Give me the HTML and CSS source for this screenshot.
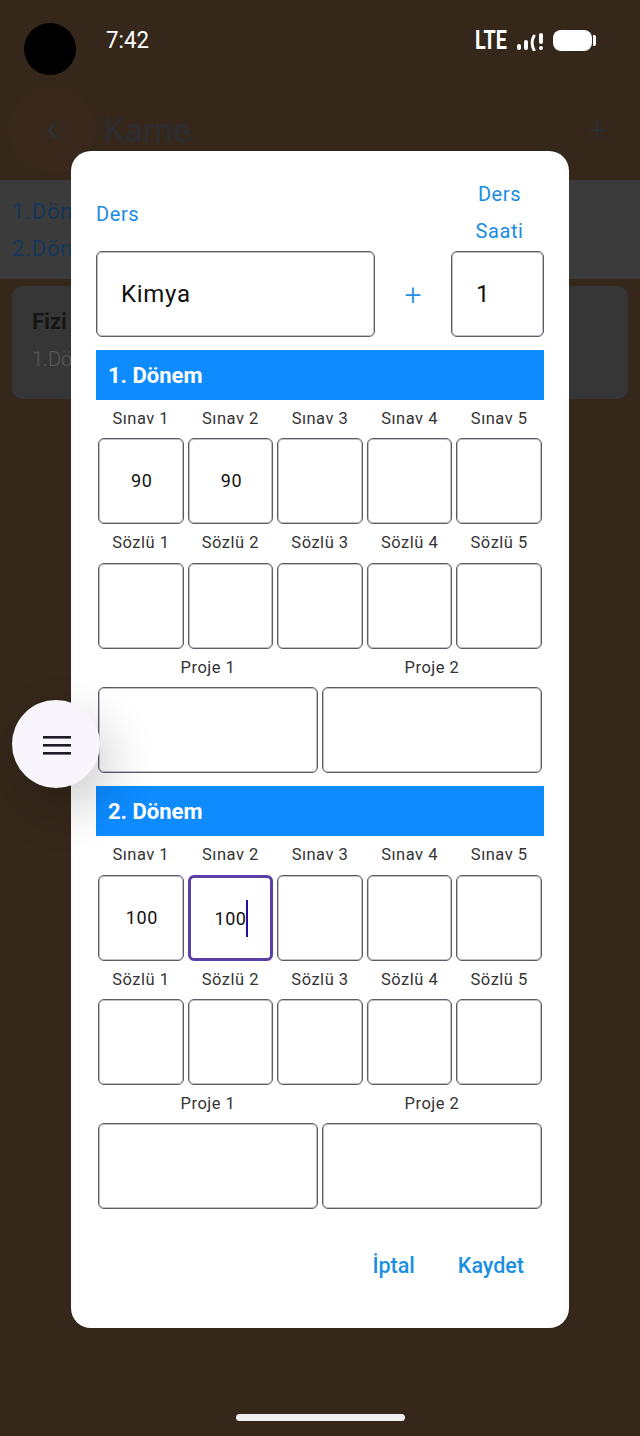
FILE: index.html
```html
<!DOCTYPE html>
<html lang="tr">
<head>
    <meta charset="UTF-8">
    <meta name="viewport" content="width=device-width, initial-scale=1.0">
    <title>Karne</title>
    <link rel="stylesheet" href="styles.css">
</head>
<body>
    <div class="screen">
        <div class="camera"></div>
        <div class="status-bar">
            <span class="clock">7:42</span>
            <div class="status-icons">
                <span class="lte">LTE</span>
                <svg class="signal" width="28" height="20" viewBox="0 0 28 20">
                    <rect x="1" y="13" width="4" height="6" rx="2" fill="#fff"/>
                    <rect x="8" y="9" width="4" height="10" rx="2" fill="#fff"/>
                    <path d="M18 5 C15.5 9 15.5 15 18 19" fill="none" stroke="#fff" stroke-width="3" stroke-linecap="round"/>
                    <rect x="23" y="2" width="4" height="11" rx="2" fill="#fff"/>
                    <rect x="23" y="15" width="4" height="4" rx="2" fill="#fff"/>
                </svg>
                <div class="battery"></div>
                <div class="battery-cap"></div>
            </div>
        </div>

        <div class="app-header">
            <div class="back-btn">‹</div>
            <h1>Karne</h1>
            <span class="add-btn">+</span>
        </div>

        <div class="summary">
            <div>1.Dön</div>
            <div>2.Dön</div>
        </div>

        <div class="course-card">
            <div class="course-name">Fizi</div>
            <div class="course-sub">1.Dö</div>
        </div>

        <div class="modal">
            <div class="label-row">
                <div class="label-left">Ders</div>
                <div class="label-right">Ders<br>Saati</div>
            </div>
            <div class="course-row">
                <div class="box box-name">Kimya</div>
                <div class="plus">+</div>
                <div class="box box-hours">1</div>
            </div>

            <div class="term-title">1. Dönem</div>
            <div class="grid-5">
                <div class="field"><label>Sınav 1</label><div class="cell">90</div></div>
                <div class="field"><label>Sınav 2</label><div class="cell">90</div></div>
                <div class="field"><label>Sınav 3</label><div class="cell"></div></div>
                <div class="field"><label>Sınav 4</label><div class="cell"></div></div>
                <div class="field"><label>Sınav 5</label><div class="cell"></div></div>
                <div class="field"><label>Sözlü 1</label><div class="cell"></div></div>
                <div class="field"><label>Sözlü 2</label><div class="cell"></div></div>
                <div class="field"><label>Sözlü 3</label><div class="cell"></div></div>
                <div class="field"><label>Sözlü 4</label><div class="cell"></div></div>
                <div class="field"><label>Sözlü 5</label><div class="cell"></div></div>
            </div>
            <div class="grid-2">
                <div class="field"><label>Proje 1</label><div class="cell"></div></div>
                <div class="field"><label>Proje 2</label><div class="cell"></div></div>
            </div>

            <div class="term-title">2. Dönem</div>
            <div class="grid-5">
                <div class="field"><label>Sınav 1</label><div class="cell">100</div></div>
                <div class="field"><label>Sınav 2</label><div class="cell cell-focus"><span class="typed">100</span></div></div>
                <div class="field"><label>Sınav 3</label><div class="cell"></div></div>
                <div class="field"><label>Sınav 4</label><div class="cell"></div></div>
                <div class="field"><label>Sınav 5</label><div class="cell"></div></div>
                <div class="field"><label>Sözlü 1</label><div class="cell"></div></div>
                <div class="field"><label>Sözlü 2</label><div class="cell"></div></div>
                <div class="field"><label>Sözlü 3</label><div class="cell"></div></div>
                <div class="field"><label>Sözlü 4</label><div class="cell"></div></div>
                <div class="field"><label>Sözlü 5</label><div class="cell"></div></div>
            </div>
            <div class="grid-2">
                <div class="field"><label>Proje 1</label><div class="cell"></div></div>
                <div class="field"><label>Proje 2</label><div class="cell"></div></div>
            </div>

            <div class="actions">
                <span>İptal</span>
                <span>Kaydet</span>
            </div>
        </div>

        <div class="fab">
            <svg width="30" height="22" viewBox="0 0 30 22">
                <rect x="1" y="3" width="28" height="2.6" fill="#1d1b26"/>
                <rect x="1" y="11" width="28" height="2.6" fill="#1d1b26"/>
                <rect x="1" y="19" width="28" height="2.6" fill="#1d1b26"/>
            </svg>
        </div>

        <div class="home-bar"></div>
    </div>
</body>
</html>
```

FILE: styles.css
```css
* {
    margin: 0;
    padding: 0;
    box-sizing: border-box;
}

body {
    font-family: 'Roboto', 'Liberation Sans', sans-serif;
    background-color: #35271a;
}

.screen {
    position: relative;
    width: 640px;
    height: 1436px;
    overflow: hidden;
    background: #35271a;
}

.camera {
    position: absolute;
    left: 24px;
    top: 23px;
    width: 52px;
    height: 52px;
    border-radius: 50%;
    background: #000;
}

.status-bar {
    height: 80px;
    padding: 27px 44px 0 106px;
    display: flex;
    justify-content: space-between;
    align-items: flex-start;
    color: #fff;
}

.clock {
    margin-top: 1px;
    font-size: 23px;
    line-height: 26px;
    transform: scaleX(0.97);
    transform-origin: left center;
}

.status-icons {
    display: flex;
    align-items: center;
    height: 26px;
}

.lte {
    width: 36px;
    font-size: 26px;
    font-weight: 700;
    line-height: 26px;
    transform: scaleX(0.76);
    transform-origin: left center;
    white-space: nowrap;
}

.signal {
    margin: 0 0 -1px 5px;
}

.battery {
    width: 39px;
    height: 21px;
    margin-left: 9px;
    border-radius: 8px;
    background: #fff;
}

.battery-cap {
    width: 3px;
    height: 11px;
    margin-left: 1px;
    border-radius: 0 2px 2px 0;
    background: #fff;
}

.app-header {
    height: 100px;
    display: flex;
    align-items: center;
    padding: 0 32px 0 8px;
    color: #2b2d33;
}

.back-btn {
    width: 88px;
    height: 88px;
    border-radius: 50%;
    background: #37281b;
    text-align: center;
    font-size: 38px;
    line-height: 84px;
    color: #2d323a;
}

.app-header h1 {
    flex: 1;
    margin-left: 8px;
    font-size: 33.5px;
    font-weight: 400;
}

.add-btn {
    font-size: 36px;
    font-weight: 300;
}

.summary {
    height: 99px;
    padding: 13px 12px 0;
    background: #3b3b3b;
    color: #14365a;
    font-size: 22px;
    line-height: 37px;
    letter-spacing: 0.8px;
}

.course-card {
    margin: 7px 12px 0;
    height: 113px;
    padding: 23px 20px;
    border-radius: 10px;
    background: #363636;
}

.course-name {
    font-size: 22px;
    font-weight: 700;
    color: #151515;
}

.course-sub {
    margin-top: 13px;
    font-size: 20px;
    font-weight: 300;
    color: #5a5a5a;
}

.modal {
    position: absolute;
    left: 71px;
    top: 151px;
    width: 498px;
    height: 1177px;
    padding: 25px 25px 0;
    border-radius: 20px;
    background: #fff;
}

.label-row {
    height: 75px;
    display: flex;
    justify-content: space-between;
    align-items: center;
    color: #1a8ce4;
    font-size: 20px;
    letter-spacing: 0.6px;
}

.label-right {
    width: 93px;
    padding-left: 4px;
    margin-top: -2px;
    line-height: 37px;
    text-align: center;
}

.course-row {
    display: flex;
    height: 86px;
    margin-bottom: 13px;
}

.box {
    height: 86px;
    border: 1px solid #5f5a68;
    box-shadow: inset 0 0 0 1px rgba(121, 116, 126, 0.45);
    border-radius: 6px;
    font-size: 24px;
    line-height: 84px;
    color: #111;
    letter-spacing: 0.7px;
}

.box-name {
    width: 279px;
    padding-left: 24px;
}

.box-hours {
    width: 93px;
    padding-left: 24px;
}

.plus {
    width: 76px;
    text-align: center;
    color: #1d8fe6;
    font-size: 30px;
    font-weight: 300;
    line-height: 88px;
}

.term-title {
    height: 50px;
    padding-left: 12px;
    background: #0d8bff;
    color: #fff;
    font-size: 22px;
    font-weight: 700;
    line-height: 51px;
}

.grid-5 {
    display: grid;
    grid-template-columns: repeat(5, 1fr);
}

.grid-2 {
    display: grid;
    grid-template-columns: repeat(2, 1fr);
    margin-bottom: 13px;
}

.field {
    padding: 0 2px;
    text-align: center;
}

.field label {
    display: block;
    height: 38.4px;
    color: #333;
    font-size: 16.5px;
    line-height: 38px;
    letter-spacing: 0.5px;
}

.cell {
    height: 86px;
    padding-left: 2px;
    border: 1px solid #5f5a68;
    box-shadow: inset 0 0 0 1px rgba(121, 116, 126, 0.45);
    border-radius: 6px;
    color: #111;
    font-size: 18px;
    line-height: 84px;
    letter-spacing: 0.6px;
}

.cell-focus {
    padding-left: 0;
    border: 3px solid #5b3fa6;
    box-shadow: none;
    line-height: 80px;
}

.typed {
    display: inline-block;
    height: 37px;
    line-height: 37px;
    vertical-align: middle;
    border-right: 2px solid #2a0f9e;
    margin-right: -2px;
    letter-spacing: 0.4px;
}

.actions {
    display: flex;
    justify-content: flex-end;
    gap: 43px;
    margin-top: 42px;
    padding-right: 20px;
    color: #1a8fe3;
    font-size: 21.5px;
    font-weight: 500;
    line-height: 30px;
}

.fab {
    position: absolute;
    left: 12px;
    top: 700px;
    width: 88px;
    height: 88px;
    padding-left: 2px;
    display: flex;
    align-items: center;
    justify-content: center;
    border-radius: 50%;
    background: #f8f5fd;
    box-shadow: 10px 20px 50px rgba(0, 0, 0, 0.2);
}

.home-bar {
    position: absolute;
    left: 236px;
    top: 1414px;
    width: 169px;
    height: 7px;
    border-radius: 4px;
    background: #eeeeee;
}
```
